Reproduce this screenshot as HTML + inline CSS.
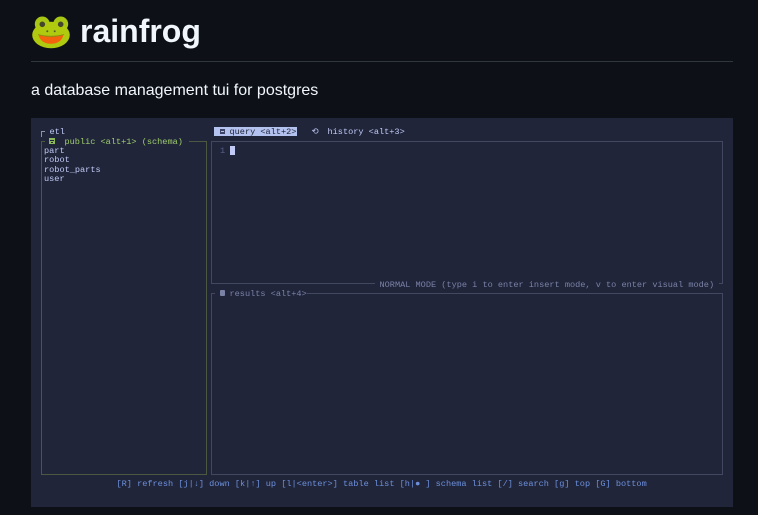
<!DOCTYPE html>
<html>
<head>
<meta charset="utf-8">
<style>
html,body{margin:0;padding:0;background:#0d1117;width:758px;height:515px;overflow:hidden}
.a{position:absolute}
.t{position:absolute;font-family:"Liberation Mono","DejaVu Sans Mono",monospace;font-size:8.58px;line-height:10px;white-space:pre;height:10px;filter:blur(.3px)}
.b{position:absolute;box-sizing:border-box}
</style>
</head>
<body>
<svg class="a" style="left:0;top:0" width="80" height="55" viewBox="0 0 80 55">
<circle cx="42.3" cy="24" r="7.5" fill="#a8c614"/>
<circle cx="60.7" cy="24" r="7.5" fill="#a8c614"/>
<ellipse cx="51" cy="35" rx="18.8" ry="13.2" fill="#afca0f"/>
<circle cx="42.3" cy="24.3" r="2.8" fill="#45462e"/>
<circle cx="60.7" cy="24.3" r="2.8" fill="#45462e"/>
<circle cx="47.3" cy="31.3" r="1" fill="#55602a"/>
<circle cx="54.7" cy="31.3" r="1" fill="#55602a"/>
<path d="M38.5 35 Q51 38.5 63.5 35 Q61 43.8 51 43.8 Q41 43.8 38.5 35Z" fill="#f4640c"/>
<path d="M38 34.6 Q51 38 64 34.6" fill="none" stroke="#7f8a10" stroke-width=".8"/>
</svg>
<div class="a" style="left:80px;top:10px;font:bold 32px/42px 'Liberation Sans',sans-serif;color:#f0f6fc">rainfrog</div>
<div class="a" style="left:31px;top:61px;width:702px;height:1px;background:#30363d"></div>
<div class="a" style="left:31px;top:80px;font:16px/21px 'Liberation Sans',sans-serif;color:#f0f6fc">a database management tui for postgres</div>

<div class="a" style="left:31px;top:118px;width:702px;height:389px;background:#20253a"></div>

<!-- left -->
<div class="b" style="left:41px;top:131px;width:4px;height:6px;border-left:1px solid #8d93ab;border-top:1px solid #8d93ab"></div>
<div class="t" style="left:49.5px;top:127px;color:#c0caf5">etl</div>
<div class="b" style="left:41px;top:141px;width:166px;height:334px;border:1px solid #4d5840"></div>
<div class="a" style="left:45px;top:136px;width:144px;height:10px;background:#20253a"></div>
<svg class="a" style="left:49px;top:138px" width="6" height="6" viewBox="0 0 6 6"><rect width="6" height="6" fill="#8cb85c"/><rect x="1" y="2" width="4" height="1" fill="#20253a"/><rect x="2" y="4" width="2" height="1" fill="#20253a"/></svg>
<div class="t" style="left:64.5px;top:137px;color:#9ece6a">public &lt;alt+1&gt; (schema)</div>
<div class="t" style="left:44px;top:145.5px;color:#c0caf5">part</div>
<div class="t" style="left:44px;top:155px;color:#c0caf5">robot</div>
<div class="t" style="left:44px;top:165px;color:#c0caf5">robot_parts</div>
<div class="t" style="left:44px;top:174px;color:#c0caf5">user</div>

<!-- tabs -->
<div class="a" style="left:214px;top:127px;width:83px;height:9px;background:#b4c2f0"></div>
<svg class="a" style="left:220px;top:129px" width="5" height="5" viewBox="0 0 5 5"><rect width="5" height="5" fill="#3d4466"/><rect x="1" y="2" width="3" height="1" fill="#b4c2f0"/></svg>
<div class="t" style="left:229.5px;top:127px;color:#1f2335">query &lt;alt+2&gt;</div>
<div class="t" style="left:311.5px;top:127px;color:#c0caf5">⟲</div>
<div class="t" style="left:327.5px;top:127px;color:#c0caf5">history &lt;alt+3&gt;</div>

<!-- query box -->
<div class="b" style="left:211px;top:141px;width:512px;height:143px;border:1px solid #42485f"></div>
<div class="a" style="left:375px;top:279px;width:346px;height:10px;background:#20253a"></div>
<div class="t" style="left:379.5px;top:280px;color:#7a82a6">NORMAL MODE (type i to enter insert mode, v to enter visual mode)</div>
<div class="a" style="left:719px;top:283px;width:4px;height:1px;background:#42485f"></div>
<div class="a" style="left:722px;top:279px;width:1px;height:5px;background:#42485f"></div>
<div class="t" style="left:220px;top:146px;color:#565f89">1</div>
<div class="a" style="left:230px;top:146px;width:5px;height:9px;background:#c0caf5"></div>

<!-- results box -->
<div class="b" style="left:211px;top:293px;width:512px;height:182px;border:1px solid #42485f"></div>
<div class="a" style="left:215px;top:288px;width:92px;height:10px;background:#20253a"></div>
<svg class="a" style="left:220px;top:290px" width="5" height="6" viewBox="0 0 5 6"><rect width="5" height="6" rx="1" fill="#7a82a6"/></svg>
<div class="t" style="left:229.5px;top:289px;color:#7a82a6">results &lt;alt+4&gt;</div>

<!-- footer -->
<div class="t" style="left:116.5px;top:479px;color:#7aa2f7;opacity:.85">[R] refresh [j|↓] down [k|↑] up [l|&lt;enter&gt;] table list [h|● ] schema list [/] search [g] top [G] bottom</div>
</body>
</html>
